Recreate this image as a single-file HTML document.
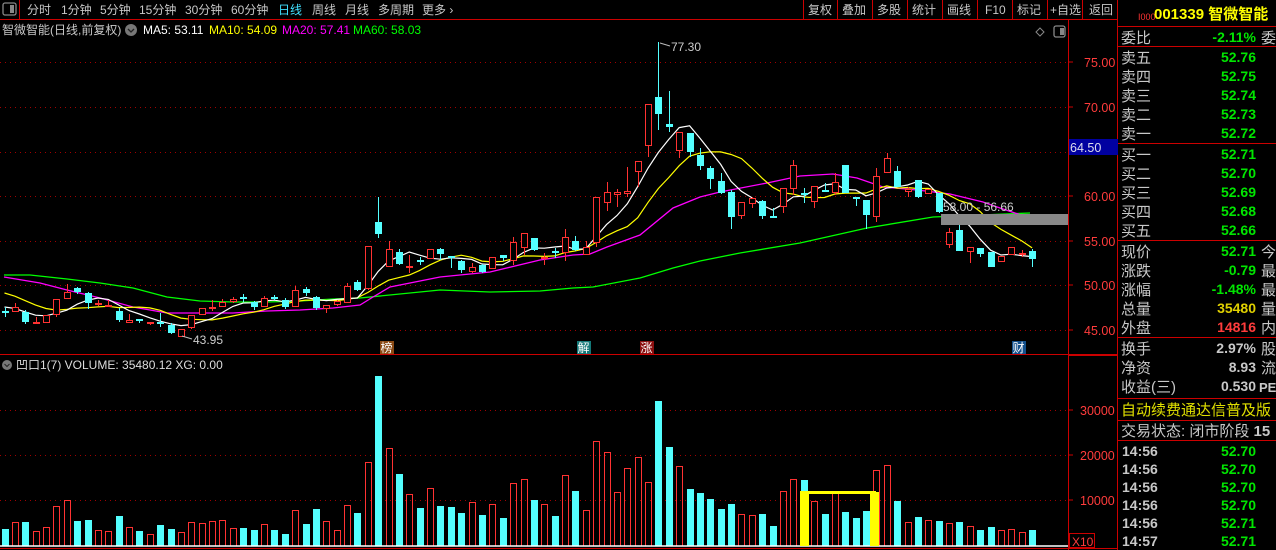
<!DOCTYPE html>
<html><head><meta charset="utf-8"><style>
html,body{margin:0;padding:0;background:#000;width:1276px;height:550px;overflow:hidden}
svg{display:block}
text{font-family:"Liberation Sans","Noto Sans CJK SC",sans-serif}
</style></head><body>
<svg id="s" width="1276" height="550" xmlns="http://www.w3.org/2000/svg">
<rect width="1276" height="550" fill="#000"/>
<g id="grid"></g>
<g id="chart"></g>
<!-- top bar -->
<rect x="3" y="3" width="13" height="12" fill="none" stroke="#888" stroke-width="1.3" rx="2"/>
<rect x="10" y="5" width="4" height="8" fill="#888"/>
<line x1="19.5" y1="0" x2="19.5" y2="19" stroke="#c00" />
<line x1="0" y1="19.5" x2="1118" y2="19.5" stroke="#c00"/>
<g font-size="12" fill="#c8c8c8">
<text x="27" y="14">分时</text><text x="61" y="14">1分钟</text><text x="100" y="14">5分钟</text>
<text x="139" y="14">15分钟</text><text x="185" y="14">30分钟</text><text x="231" y="14">60分钟</text>
<text x="278" y="14" fill="#40e0ff">日线</text><text x="312" y="14">周线</text><text x="345" y="14">月线</text>
<text x="378" y="14">多周期</text><text x="422" y="14">更多 ›</text>
<text x="808" y="14">复权</text><text x="842" y="14">叠加</text><text x="877" y="14">多股</text>
<text x="912" y="14">统计</text><text x="947" y="14">画线</text><text x="985" y="14">F10</text>
<text x="1017" y="14">标记</text><text x="1050" y="14">+自选</text><text x="1089" y="14">返回</text>
</g>
<g stroke="#c00"><line x1="803.5" y1="0" x2="803.5" y2="19"/><line x1="837.5" y1="0" x2="837.5" y2="19"/><line x1="872.5" y1="0" x2="872.5" y2="19"/><line x1="907.5" y1="0" x2="907.5" y2="19"/><line x1="942.5" y1="0" x2="942.5" y2="19"/><line x1="977.5" y1="0" x2="977.5" y2="19"/><line x1="1012.5" y1="0" x2="1012.5" y2="19"/><line x1="1047.5" y1="0" x2="1047.5" y2="19"/><line x1="1082.5" y1="0" x2="1082.5" y2="19"/></g>
<!-- info line -->
<g font-size="12">
<text x="2" y="34" fill="#c8c8c8">智微智能(日线,前复权)</text>
<circle cx="131" cy="30" r="6" fill="#777"/><path d="M128 29 L131 32 L134 29" stroke="#222" stroke-width="1.3" fill="none"/>
<text x="143" y="34" fill="#fff">MA5: 53.11</text>
<text x="209" y="34" fill="#ff0">MA10: 54.09</text>
<text x="282" y="34" fill="#f0f">MA20: 57.41</text>
<text x="353" y="34" fill="#0f0">MA60: 58.03</text>
</g>
<path d="M1040 28 L1044 32 L1040 36 L1036 32 Z" fill="none" stroke="#888"/>
<rect x="1054" y="26" width="11" height="11" rx="2" fill="none" stroke="#888" stroke-width="1.3"/><rect x="1060" y="28" width="4" height="7" fill="#888"/>
<!-- axis -->
<line x1="1068.5" y1="19" x2="1068.5" y2="550" stroke="#c00"/>
<line x1="0" y1="354.5" x2="1118" y2="354.5" stroke="#c00"/>
<line x1="1068" y1="355.5" x2="1118" y2="355.5" stroke="#c00"/>
<line x1="1117.5" y1="0" x2="1117.5" y2="550" stroke="#c00"/>
<line x1="0" y1="548.5" x2="1118" y2="548.5" stroke="#c00"/>
<line x1="0" y1="546" x2="1068" y2="546" stroke="#fff" stroke-width="1.5"/>
<g font-size="12.5" fill="#ff3c3c">
<text x="1084" y="67">75.00</text><text x="1084" y="112">70.00</text><text x="1084" y="201">60.00</text>
<text x="1084" y="246">55.00</text><text x="1084" y="290">50.00</text><text x="1084" y="335">45.00</text>
<text x="1080" y="415">30000</text><text x="1080" y="460">20000</text><text x="1080" y="505">10000</text>
<text x="1072" y="546" font-size="12">X10</text>
</g>
<rect x="1069.5" y="533.5" width="25" height="14" fill="none" stroke="#c00"/>
<g stroke="#c00"><line x1="1068" y1="62" x2="1073" y2="62"/><line x1="1068" y1="107" x2="1073" y2="107"/><line x1="1068" y1="196" x2="1073" y2="196"/><line x1="1068" y1="241" x2="1073" y2="241"/><line x1="1068" y1="285" x2="1073" y2="285"/><line x1="1068" y1="330" x2="1073" y2="330"/><line x1="1068" y1="410" x2="1073" y2="410"/><line x1="1068" y1="455" x2="1073" y2="455"/><line x1="1068" y1="500" x2="1073" y2="500"/></g>
<rect x="1069" y="139" width="49" height="16" fill="#0000a0"/>
<text x="1070" y="152" font-size="12.5" fill="#dde">64.50</text>
<!-- volume header -->
<circle cx="7" cy="365" r="5" fill="#777"/><path d="M4.5 364 L7 366.5 L9.5 364" stroke="#222" fill="none"/>
<text x="16" y="369" font-size="12" fill="#ddd">凹口1(7) VOLUME: 35480.12 XG: 0.00</text>
<!-- annotations -->
<path d="M660 43 L670 46" stroke="#bbb"/><text x="671" y="51" font-size="12" fill="#ccc">77.30</text>
<path d="M182 336 L192 339" stroke="#bbb"/><text x="193" y="344" font-size="12" fill="#ccc">43.95</text>
<rect x="941" y="214" width="127" height="11" fill="#888"/>
<text x="943" y="211" font-size="12" fill="#ccc">58.00 - 56.66</text>
<rect x="380" y="341" width="14" height="13" fill="#8b4a14"/><text x="380.5" y="352" font-size="12" fill="#fff">榜</text>
<rect x="577" y="341" width="14" height="13" fill="#147878"/><text x="577.5" y="352" font-size="12" fill="#fff">解</text>
<rect x="640" y="341" width="14" height="13" fill="#8b1010"/><text x="640.5" y="352" font-size="12" fill="#fff">涨</text>
<rect x="1012" y="341" width="14" height="13" fill="#14508b"/><text x="1012.5" y="352" font-size="12" fill="#fff">财</text>
<!-- yellow box -->
<g fill="#ff0"><rect x="800" y="491" width="9" height="55"/><rect x="870" y="492" width="9" height="54"/><rect x="800" y="491" width="76" height="3"/></g>
<!-- right panel -->
<g stroke="#c00"><line x1="1118" y1="26.5" x2="1276" y2="26.5"/><line x1="1118" y1="46.5" x2="1276" y2="46.5"/><line x1="1118" y1="143.5" x2="1276" y2="143.5"/><line x1="1118" y1="240.5" x2="1276" y2="240.5"/><line x1="1118" y1="337.5" x2="1276" y2="337.5"/><line x1="1118" y1="398.5" x2="1276" y2="398.5"/><line x1="1118" y1="420.5" x2="1276" y2="420.5"/><line x1="1118" y1="440.5" x2="1276" y2="440.5"/></g>
<text x="1138" y="20" font-size="9" fill="#f33">I000</text>
<text x="1154" y="19" font-size="15" font-weight="bold" fill="#ff0">001339 智微智能</text>
<g font-size="15" fill="#c8c8c8">
<text x="1121" y="43">委比</text>
<text x="1121" y="63">卖五</text><text x="1121" y="82">卖四</text><text x="1121" y="101">卖三</text><text x="1121" y="120">卖二</text><text x="1121" y="139">卖一</text>
<text x="1121" y="160">买一</text><text x="1121" y="179">买二</text><text x="1121" y="198">买三</text><text x="1121" y="217">买四</text><text x="1121" y="236">买五</text>
<text x="1121" y="257">现价</text><text x="1121" y="276">涨跌</text><text x="1121" y="295">涨幅</text><text x="1121" y="314">总量</text><text x="1121" y="333">外盘</text>
<text x="1121" y="354">换手</text><text x="1121" y="373">净资</text><text x="1121" y="392">收益(三)</text>
<text x="1121" y="436">交易状态: 闭市阶段 <tspan font-weight="bold">15</tspan></text>
<text x="1261" y="43">委</text><text x="1261" y="257">今</text><text x="1261" y="276">最</text><text x="1261" y="295">最</text><text x="1261" y="314">量</text><text x="1261" y="333">内</text><text x="1261" y="354">股</text><text x="1261" y="373">流</text><text x="1259" y="392" font-size="13" font-weight="bold">PE</text>
</g>
<text x="1121" y="415" font-size="15" fill="#e0e000">自动续费通达信普及版</text>
<g font-size="14" font-weight="bold" text-anchor="end" fill="#00e600">
<text x="1256" y="42">-2.11%</text>
<text x="1256" y="62">52.76</text><text x="1256" y="81">52.75</text><text x="1256" y="100">52.74</text><text x="1256" y="119">52.73</text><text x="1256" y="138">52.72</text>
<text x="1256" y="159">52.71</text><text x="1256" y="178">52.70</text><text x="1256" y="197">52.69</text><text x="1256" y="216">52.68</text><text x="1256" y="235">52.66</text>
<text x="1256" y="256">52.71</text><text x="1256" y="275">-0.79</text><text x="1256" y="294">-1.48%</text>
<text x="1256" y="313" fill="#e0d000">35480</text><text x="1256" y="332" fill="#ff3c3c">14816</text>
<text x="1256" y="353" fill="#c8c8c8">2.97%</text><text x="1256" y="372" fill="#c8c8c8">8.93</text><text x="1256" y="391" fill="#c8c8c8">0.530</text>
<text x="1256" y="456">52.70</text><text x="1256" y="474">52.70</text><text x="1256" y="492">52.70</text><text x="1256" y="510">52.70</text><text x="1256" y="528">52.71</text><text x="1256" y="546">52.71</text>
</g>
<g font-size="14" font-weight="bold" fill="#c8c8c8">
<text x="1122" y="456">14:56</text><text x="1122" y="474">14:56</text><text x="1122" y="492">14:56</text><text x="1122" y="510">14:56</text><text x="1122" y="528">14:56</text><text x="1122" y="546">14:57</text>
</g>
</svg>
<script>
var NS="http://www.w3.org/2000/svg";
function el(p,t,a){var e=document.createElementNS(NS,t);for(var k in a)e.setAttribute(k,a[k]);p.appendChild(e);return e;}
var G=document.getElementById('grid'),C=document.getElementById('chart');
[62,107,152,196,241,285,330,410,455,500].forEach(function(y){el(G,'line',{x1:0,x2:1068,y1:y+.5,y2:y+.5,stroke:'#a00000','stroke-dasharray':'1 4'});});
var d=[
['c',312,312,307,317],['r',307,312,303,312],['c',312,322,310,324],['r',323,323,317,323],['r',315,323,315,323],['r',299,315,299,317],['r',292,299,284,299],['c',288,292,287,294],['c',293,303,292,309],['r',304,304,300,306],
['r',306,306,300,307],['c',311,320,308,322],['r',320,323,314,323],['c',320,320,320,323],['r',323,323,322,325],['c',323,323,313,327],['c',325,333,323,334],['r',329,337,329,337],['r',315,328,315,329],['r',308,315,308,315],
['r',308,308,300,311],['r',302,307,299,307],['r',299,302,297,303],['c',298,298,294,302],['c',302,307,301,310],['r',298,307,296,307],['c',297,299,295,300],['c',300,307,298,309],['r',290,307,286,307],['c',289,293,287,296],
['c',297,308,296,310],['r',305,309,305,313],['r',301,305,300,306],['r',286,303,283,303],['c',282,290,280,291],['r',246,289,246,290],['c',222,234,197,238],['r',249,267,241,267],['c',252,264,249,265],['r',267,267,255,273],
['c',261,262,257,265],['r',249,259,249,259],['c',249,254,248,260],['c',257,257,256,268],['c',261,270,260,273],['r',267,272,263,273],['c',265,272,264,273],['r',257,269,257,269],['c',255,258,255,261],['r',242,261,237,265],
['r',233,248,233,255],['c',238,250,238,251],['r',258,258,253,265],['c',252,252,248,258],['r',237,253,229,261],['c',241,250,236,251],['r',247,255,241,255],['r',197,243,197,247],['r',192,203,182,211],['r',192,195,189,207],
['r',191,194,167,197],['r',161,172,161,187],['r',104,146,104,157],['c',97,114,42,130],['c',124,127,91,132],['r',132,151,132,158],['c',133,152,133,157],['c',155,166,148,170],['c',168,179,166,189],['c',181,193,173,194],
['c',192,217,190,229],['r',202,216,202,219],['r',198,204,197,208],['c',201,216,200,219],['c',217,217,208,218],['r',188,207,188,213],['r',165,189,160,195],['c',193,195,188,203],['r',186,202,186,208],['c',191,191,183,192],
['r',182,193,173,195],['c',165,193,165,193],['c',198,198,198,206],['c',200,215,200,229],['r',176,217,168,222],['r',158,173,153,173],['c',171,187,166,187],['r',189,192,187,197],['c',180,197,180,198],['r',189,194,189,194],
['c',193,212,193,213],['r',232,245,228,248],['c',230,251,225,251],['r',247,252,247,263],['c',248,254,248,257],['c',252,267,252,267],['r',256,262,256,262],['r',247,255,247,255],['r',254,254,250,257],['c',251,259,249,267]];
var v=[529,522,522,531,527,506,500,521,520,530,531,516,527,531,534,525,529,532,522,523,521,520,528,528,530,524,530,534,510,524,509,521,530,505,513,462,376,448,474,494,508,488,506,507,513,502,515,504,518,483,479,500,504,516,475,491,510,441,452,492,468,457,482,401,447,466,489,493,499,509,504,514,515,514,526,491,479,480,501,514,493,512,518,511,470,465,501,522,517,520,521,523,522,526,530,527,530,529,532,530];
var RED='#ff3232',CY='#54ffff';
function X(i){return 4.5+i*10.38;}
d.forEach(function(c,i){var x=Math.round(X(i))-3,t=v[i];
 if(c[0]=='c')el(C,'rect',{x:x,y:t,width:7,height:546-t,fill:CY});
 else el(C,'rect',{x:x+.5,y:t+.5,width:6,height:545.5-t,fill:'none',stroke:RED});});
var cl=[275,277,279,281,283,300,304,307,312];d.forEach(function(c){cl.push(c[0]=='r'?c[1]:c[2]);});
function ma(n){var p=[];for(var i=0;i<100;i++){var s=0,k=i+9;for(var j=0;j<n;j++)s+=cl[k-j];p.push(X(i).toFixed(1)+','+(s/n).toFixed(1));}return p.join(' ');}
el(C,'polyline',{points:'4,275 30,275 67,279 100,283 133,288 167,297 200,301 233,302 267,302 300,301 333,299 360,298 440,290 490,292 540,291 573,288 593,287 640,278 673,268 700,261 740,253 800,243 867,228 933,217 1030,213',fill:'none',stroke:'#00ff00','stroke-width':1.3});
el(C,'polyline',{points:'4,277 40,283 67,290 100,298 133,307 167,313 200,313 233,313 267,311 300,310 333,308 360,305 373,297 390,287 440,277 490,272 540,260 573,255 590,254 607,247 640,235 673,208 700,197 720,192 767,183 800,176 833,174 857,178 883,187 917,190 950,194 983,202 1000,208 1030,218',fill:'none',stroke:'#ff00ff','stroke-width':1.3});
el(C,'polyline',{points:ma(10),fill:'none',stroke:'#ffff00','stroke-width':1.2});
el(C,'polyline',{points:ma(5),fill:'none',stroke:'#ffffff','stroke-width':1.2});
d.forEach(function(c,i){var x=Math.round(X(i)),col=c[0]=='r'?RED:CY;
 el(C,'line',{x1:x+.5,x2:x+.5,y1:c[3],y2:c[4],stroke:col});
 if(c[2]-c[1]<2){el(C,'rect',{x:x-3,y:c[1]-1,width:7,height:2,fill:col});}
 else if(c[0]=='c')el(C,'rect',{x:x-3,y:c[1],width:7,height:c[2]-c[1],fill:CY});
 else {el(C,'rect',{x:x-3,y:c[1],width:7,height:c[2]-c[1],fill:'#000'});el(C,'rect',{x:x-2.5,y:c[1]+.5,width:6,height:c[2]-c[1]-1,fill:'none',stroke:RED});}
});
</script>
</body></html>
